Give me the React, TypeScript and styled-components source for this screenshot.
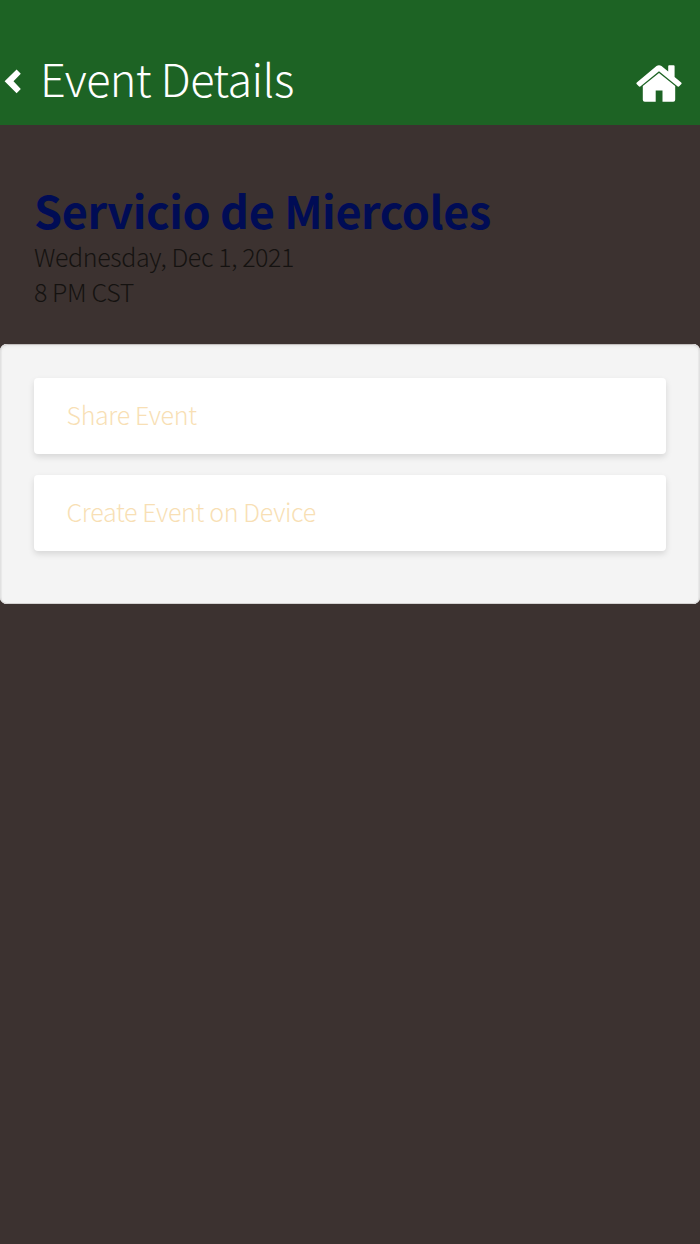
import React from 'react';
import styled, { createGlobalStyle } from 'styled-components';

const GlobalStyle = createGlobalStyle`
  * { box-sizing: border-box; }
  body {
    margin: 0;
    background: #3c3230;
    font-family: "Noto Sans CJK JP", "Noto Sans", sans-serif;
    font-weight: 300;
  }
`;

const Page = styled.main`
  min-height: 1244px;
  background: #3c3230;
`;

const Header = styled.header`
  display: flex;
  align-items: flex-start;
  height: 125px;
  padding: 53px 18px 0 5px;
  background: #1d6324;
  color: #fff;
`;

const BackIcon = styled.svg`
  width: 16px;
  height: 25px;
  margin-top: 16px;
  overflow: visible;
`;

const Title = styled.h1`
  flex: 1;
  margin: 1px 0 0 19px;
  font-size: 45px;
  font-weight: 300;
  line-height: 48px;
  letter-spacing: -0.57px;
  white-space: nowrap;
`;

const HomeIcon = styled.svg`
  width: 46px;
  height: 38px;
  margin-top: 12px;
`;

const Details = styled.section`
  height: 219px;
  padding: 60px 34px 0;
  color: #151210;
`;

const EventName = styled.h2`
  margin: 0 0 4px;
  color: #000c55;
  font-size: 45px;
  font-weight: 600;
  line-height: 50px;
  letter-spacing: -0.42px;
  white-space: nowrap;
`;

const Info = styled.p`
  margin: 0;
  font-size: 25px;
  line-height: 35px;
  letter-spacing: -0.39px;
`;

const Panel = styled.section`
  display: flex;
  flex-direction: column;
  gap: 20.5px;
  height: 260px;
  padding: 34px 34px 0;
  border-radius: 7px;
  background: #f4f4f4;
  box-shadow: inset 1.5px 0 0 #e1e1e1, inset -1.5px 0 0 #e1e1e1,
    inset 0 1px 0 #c3bfbe, inset 0 -1px 0 #d4d2d1, inset 0 2px 3px #e4e4e4;
`;

const Action = styled.button`
  height: 76px;
  padding: 0 32px 4px 32.5px;
  border: 0;
  border-radius: 4px;
  background: #fff;
  box-shadow: 0 3px 6px rgba(0, 0, 0, 0.12);
  color: #f8dfb5;
  font: inherit;
  font-size: 25px;
  letter-spacing: -0.34px;
  text-align: left;
`;

export default function App() {
  return (
    <Page>
      <GlobalStyle />
      <Header>
        <BackIcon viewBox="0 0 16 25" aria-label="Back">
          <path d="M11.6.4 15.8 4.7 8.5 12.3 15.8 19.9 11.6 24.2-.4 12.3Z" fill="currentColor" />
        </BackIcon>
        <Title>Event Details</Title>
        <HomeIcon viewBox="0 0 46 38" aria-label="Home" fill="currentColor">
          <path d="M6.8 20.9 23 7.9 39.2 20.9V34.8Q39.2 36.8 37.2 36.8H26.5V25.6H19.7V36.8H8.8Q6.8 36.8 6.8 34.8Z" />
          <path d="M.6 19Q0 18.2.8 17.5L20.5 1Q23 -.7 25.5 1L32.2 6.6V1.2Q32.2.2 33.2.2H37.6Q38.6.2 38.6 1.2V11.9L45.2 17.5Q46 18.2 45.4 19L43.2 21.3Q42.5 22 41.7 21.4L23 6.3 4.3 21.4Q3.5 22 2.8 21.3Z" />
        </HomeIcon>
      </Header>
      <Details>
        <EventName>Servicio de Miercoles</EventName>
        <Info>Wednesday, Dec 1, 2021</Info>
        <Info>8 PM CST</Info>
      </Details>
      <Panel>
        <Action>Share Event</Action>
        <Action>Create Event on Device</Action>
      </Panel>
    </Page>
  );
}
